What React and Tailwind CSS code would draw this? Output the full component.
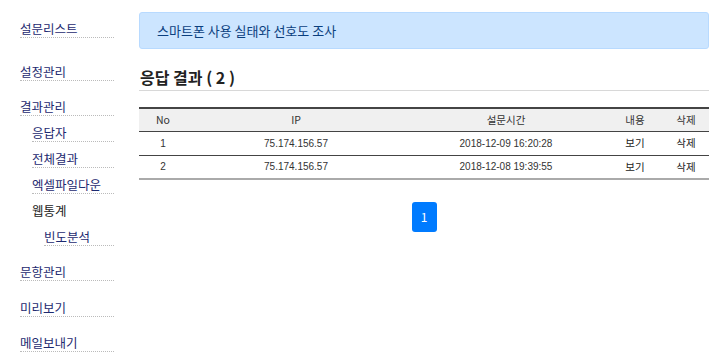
import React from 'react';

const menu = [
  { label: '설문리스트', level: 0, gap: 'mt-[19px]' },
  { label: '설정관리', level: 0, gap: 'mt-[24px]' },
  { label: '결과관리', level: 0, gap: 'mt-[16px]' },
  { label: '응답자', level: 1 },
  { label: '전체결과', level: 1 },
  { label: '엑셀파일다운', level: 1 },
  { label: '웹통계', level: 1, plain: true },
  { label: '빈도분석', level: 2 },
  { label: '문항관리', level: 0, gap: 'mt-[16px]' },
  { label: '미리보기', level: 0, gap: 'mt-[17px]' },
  { label: '메일보내기', level: 0, gap: 'mt-[16px]' },
];

const rows = [
  { no: 1, ip: '75.174.156.57', time: '2018-12-09 16:20:28' },
  { no: 2, ip: '75.174.156.57', time: '2018-12-08 19:39:55' },
];

function SideItem({ item }) {
  const indent = item.level === 0 ? 'ml-[20px]' : item.level === 1 ? 'ml-[32px]' : 'ml-[44px]';
  return (
    <div className={`${indent} ${item.gap || 'mt-[7px]'} mr-[15px]`}>
      <div
        className={`h-[19px] leading-[19px] text-[12.5px] ${item.plain ? 'text-[#222]' : 'text-[#1d2a70] border-b border-dotted border-[#bbb]'}`}
      >
        {item.label}
      </div>
    </div>
  );
}

export default function App() {
  return (
    <div
      className="w-[720px] h-[363px] overflow-hidden bg-white flex"
      style={{ fontFamily: '"Noto Sans CJK KR", "Noto Sans", sans-serif' }}
    >
      <aside className="w-[129px] shrink-0">
        {menu.map(m => <SideItem key={m.label} item={m} />)}
      </aside>

      <main className="flex-1 pl-[10px] pr-[11px] pt-[12px]">
        <div className="h-[37px] bg-[#cce5ff] border border-[#b8daff] rounded-[3px] flex items-center px-[17px] text-[13px] text-[#0b3f7e]">
          스마트폰 사용 실태와 선호도 조사
        </div>

        <h2 className="mt-[17px] text-[16px] font-bold text-[#222] leading-[22px] pl-px">응답 결과 ( 2 )</h2>
        <div className="mt-[2px] border-b border-[#d8d8d8]"></div>

        <table className="w-full mt-[16px] border-t-2 border-[#444] border-collapse text-[10px] text-[#333]">
          <thead>
            <tr className="bg-[#f0f0f0] h-[23px] border-b border-[#444] text-[10.5px]">
              <th className="font-normal w-[48px]">No</th>
              <th className="font-normal w-[218px]">IP</th>
              <th className="font-normal w-[202px]">설문시간</th>
              <th className="font-normal w-[56px]">내용</th>
              <th className="font-normal">삭제</th>
            </tr>
          </thead>
          <tbody>
            {rows.map((r, i) => (
              <tr key={r.no} className={`h-[24px] ${i === rows.length - 1 ? 'border-b-2 border-[#aaa]' : 'border-b border-[#444]'}`}>
                <td className="text-center font-['Liberation_Sans',sans-serif]">{r.no}</td>
                <td className="text-center font-['Liberation_Sans',sans-serif]">{r.ip}</td>
                <td className="text-center font-['Liberation_Sans',sans-serif]">{r.time}</td>
                <td className="text-center text-[10.5px] text-[#222]">보기</td>
                <td className="text-center text-[10.5px] text-[#222]">삭제</td>
              </tr>
            ))}
          </tbody>
        </table>

        <div className="flex justify-center mt-[22px]">
          <button className="w-[25px] h-[30px] rounded-[3px] bg-[#007bff] text-white text-[12px] flex items-center justify-center">1</button>
        </div>
      </main>
    </div>
  );
}
